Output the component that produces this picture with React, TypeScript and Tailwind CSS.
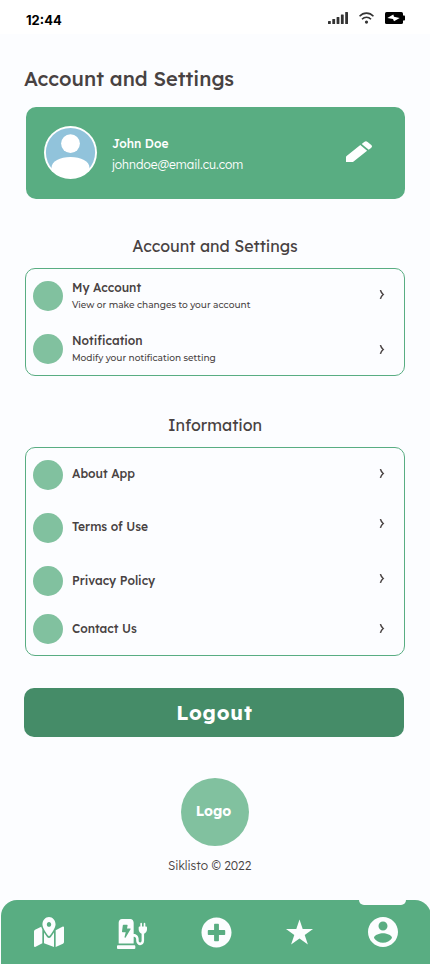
import React from "react";
import { FaChargingStation, FaMapMarkedAlt, FaPlusCircle } from "react-icons/fa";

type RowProps = {
  title: string;
  note?: string;
  height: string;
  textTop: string;
  chevronTop: string;
};

function Chevron({ className }: { className: string }) {
  return (
    <svg className={`h-[10px] w-[6px] shrink-0 ${className}`} viewBox="0 0 6 10" fill="none" stroke="#484242" strokeWidth="1.5">
      <path d="M1.400.1C2 2.200 2.900 3.400 4.200 4.500 2.900 5.600 2 6.800 1.400 8.900" />
    </svg>
  );
}

function Row({ title, note, height, textTop, chevronTop }: RowProps) {
  return (
    <div className={`flex items-start pr-[19px] pl-[7px] ${height}`}>
      <div className="mt-3 size-[30px] shrink-0 rounded-full bg-[#81c19f]" />
      <div className={`ml-[9px] flex-1 whitespace-nowrap ${textTop}`}>
        <div className="text-[12px] leading-4 font-medium text-[#484242]">{title}</div>
        {note && (
          <div className="mt-[2px] font-['Montserrat',Inter,sans-serif] text-[9.04px] leading-[14px] font-medium text-[#484242]">
            {note}
          </div>
        )}
      </div>
      <Chevron className={chevronTop} />
    </div>
  );
}

export default function App() {
  return (
    <div className="flex h-[964px] w-[430px] flex-col overflow-hidden bg-[#fcfdff] font-['Lexend',Inter,sans-serif] text-[#484242]">
      <header className="flex h-[34px] shrink-0 items-start justify-between bg-white pr-[25px] pl-[26px]">
        <span className="mt-[11px] font-[Inter,sans-serif] text-[13px] leading-[18px] font-bold text-black">12:44</span>
        <div className="mt-3 flex items-start">
          <svg className="h-3 w-5" viewBox="0 0 20 12" fill="#333">
            <rect x="0" y="9" width="2.8" height="3" rx=".5" />
            <rect x="4.3" y="7" width="2.8" height="5" rx=".5" />
            <rect x="8.6" y="5" width="2.8" height="7" rx=".5" />
            <rect x="12.9" y="2.5" width="2.8" height="9.5" rx=".5" />
            <rect x="17.2" y="0" width="2.8" height="12" rx=".5" />
          </svg>
          <svg className="ml-[11px] h-3 w-[15px]" viewBox="0 0 15 12" fill="none" stroke="#333" strokeWidth="1.6">
            <path d="M.5 4.300C4.500 0 10.500 0 14.500 4.300M3 7.300c2.600-2.700 6.400-2.700 9 0" />
            <circle cx="7.500" cy="10.100" r="1.600" fill="#333" stroke="none" />
          </svg>
          <svg className="ml-[11px] h-3 w-5" viewBox="0 0 20 12">
            <rect width="18" height="12" rx="1.600" fill="#000" />
            <rect x="17" y="3.500" width="3" height="5" rx=".8" fill="#000" />
            <path d="M2.300 6 8.300 2.600l.700 2.200 5.700 1.200L9 9.200 8 7.100z" fill="#fff" />
          </svg>
        </div>
      </header>

      <main className="flex flex-1 flex-col">
        <h1 className="mt-[31px] ml-6 text-[20px] leading-7 font-medium whitespace-nowrap">Account and Settings</h1>

        <section className="mt-[14px] ml-[26px] flex h-[92px] w-[379px] rounded-[10px] bg-[#59ad82]">
          <svg className="mt-[18px] ml-[17px] size-[55px]" viewBox="0 0 55 55">
            <defs>
              <clipPath id="avatar">
                <circle cx="27.500" cy="27.500" r="25.500" />
              </clipPath>
            </defs>
            <circle cx="27.500" cy="27.500" r="26.500" fill="#fff" />
            <circle cx="27.500" cy="27.500" r="24.600" fill="#91c3db" />
            <g clipPath="url(#avatar)" fill="#fff">
              <circle cx="27.500" cy="18.600" r="9.400" />
              <path d="M8.500 47V43C8.500 36 17 32 27.500 32S46.500 36 46.500 43V55h-38z" />
            </g>
          </svg>
          <div className="mt-[29px] ml-[14px] flex-1 whitespace-nowrap text-white">
            <div className="text-[12px] leading-4 font-medium">John Doe</div>
            <div className="mt-[5px] text-[12px] leading-4 font-light">johndoe@email.cu.com</div>
          </div>
          <svg className="mt-[33px] mr-[32px] h-[23px] w-[28px]" viewBox="0 0 28 23" fill="#fff">
            <path d="M1 22v-4.800Q1 16.500 1.600 16L15.300 5l6.800 5.800L8.600 21.500Q8 22 7.200 22z" />
            <path d="m16.700 4 2.500-2q1.700-1.300 3.400 0l3.700 3q1.600 1.400 0 2.700l-2.600 2.100z" />
          </svg>
        </section>

        <h2 className="mt-[35px] text-center text-[16px] leading-6 font-normal whitespace-nowrap">Account and Settings</h2>
        <section className="mt-[10px] ml-[25px] h-[108px] w-[380px] rounded-[10px] border border-[#59ad82]">
          <Row title="My Account" note="View or make changes to your account" height="h-[53px]" textTop="mt-[11px]" chevronTop="mt-[21px]" />
          <Row title="Notification" note="Modify your notification setting" height="h-[53px]" textTop="mt-[11px]" chevronTop="mt-[23px]" />
        </section>

        <h2 className="mt-[37px] text-center text-[16px] leading-6 font-normal whitespace-nowrap">Information</h2>
        <section className="mt-[10px] ml-[25px] h-[209px] w-[380px] rounded-[10px] border border-[#59ad82]">
          <Row title="About App" height="h-[53px]" textTop="mt-[18px]" chevronTop="mt-[21px]" />
          <Row title="Terms of Use" height="h-[53px]" textTop="mt-[18px]" chevronTop="mt-[18px]" />
          <Row title="Privacy Policy" height="h-[48px]" textTop="mt-[19px]" chevronTop="mt-[20px]" />
          <Row title="Contact Us" height="h-[53px]" textTop="mt-[19px]" chevronTop="mt-[22px]" />
        </section>

        <button className="mt-8 ml-6 h-[49px] w-[380px] rounded-[10px] bg-[#458c68] pl-px text-[20px] leading-7 font-bold tracking-[0.800px] text-white">
          Logout
        </button>

        <div className="mt-[41px] ml-[181px] flex size-[68px] items-center justify-center rounded-full bg-[#81c19f] text-[14px] font-bold text-white">
          <span className="-mt-[2px] -ml-[3px]">Logo</span>
        </div>
        <p className="mt-[12px] ml-[168px] text-[12px] leading-4 font-light whitespace-nowrap">Siklisto © 2022</p>
      </main>

      <nav className="relative ml-px flex h-16 w-[430px] shrink-0 items-start rounded-t-[16px] bg-[#59ad82] text-[#fcfdff]">
        <div className="absolute top-0 left-[358px] h-[5px] w-[47px] rounded-b-[5px] bg-[#fcfdff]" />
        <FaMapMarkedAlt className="mt-[17px] ml-[33px] h-[30px] w-[30px]" preserveAspectRatio="none" />
        <FaChargingStation className="mt-[19px] ml-[53px] h-[30px] w-[30px]" preserveAspectRatio="none" />
        <FaPlusCircle className="mt-[16.500px] ml-[53.500px] size-[31px]" />
        <svg className="mt-[19px] ml-[54.500px] h-[26px] w-[27px]" viewBox="0 0 27 26" fill="currentColor">
          <path d="M13.500.5 16.700 10H27l-8.300 6 3.200 9.500-8.400-5.900-8.400 5.900L8.300 16 0 10h10.300z" />
        </svg>
        <svg className="mt-[17px] ml-[55px] size-[30px]" viewBox="2 2 20 20" fill="currentColor">
          <path d="M12 2C6.480 2 2 6.480 2 12s4.480 10 10 10 10-4.480 10-10S17.520 2 12 2zm0 3c1.660 0 3 1.340 3 3s-1.340 3-3 3-3-1.340-3-3 1.340-3 3-3zm0 14.200c-2.500 0-4.710-1.280-6-3.220.030-1.990 4-3.080 6-3.080 1.990 0 5.970 1.090 6 3.080-1.290 1.940-3.500 3.220-6 3.220z" />
        </svg>
      </nav>
    </div>
  );
}
